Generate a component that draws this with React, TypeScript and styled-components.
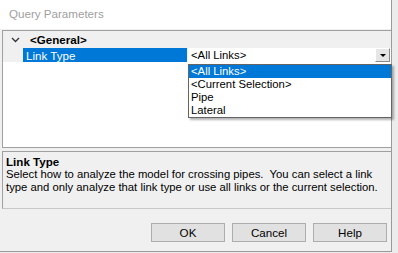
import React from "react";
import styled, { createGlobalStyle } from "styled-components";

const Global = createGlobalStyle`
  html, body { margin: 0; padding: 0; background: #ececec; }
  body { font-family: "Liberation Sans", Arial, sans-serif; font-size: 11.3px; color: #000; }
`;

const Window = styled.div`
  position: relative;
  width: 392px;
  height: 252px;
  box-sizing: border-box;
  border-right: 1px solid #9a9a9a;
  border-bottom: 1px solid #9a9a9a;
  background: #f0f0f0;
  display: flex;
  flex-direction: column;
`;

const TitleBar = styled.div`
  height: 29px;
  background: #ffffff;
  display: flex;
  align-items: center;
  padding: 0 0 3px 9px;
  box-sizing: border-box;
  font-size: 11.6px;
  color: #a0a0a0;
  flex: none;
`;

const Body = styled.div`
  flex: 1;
  display: flex;
  flex-direction: column;
  padding: 1px 0 0 2px;
  box-sizing: border-box;
`;

const Grid = styled.div`
  position: relative;
  height: 118px;
  box-sizing: border-box;
  background: #ffffff;
  border-top: 1px solid #a0a0a0;
  border-left: 1px solid #a0a0a0;
  border-bottom: 1px solid #a0a0a0;
  display: flex;
  flex-direction: column;
`;

const CategoryRow = styled.div`
  height: 17px;
  background: #f0f0f0;
  display: flex;
  align-items: center;
  font-weight: bold;
  font-size: 11.6px;
`;

const Chevron = styled.span`
  width: 27px;
  display: flex;
  justify-content: center;
  padding-right: 2px;
  box-sizing: border-box;
`;

const PropRow = styled.div`
  height: 14px;
  display: flex;
`;

const Margin = styled.div`
  width: 20px;
  background: #f0f0f0;
  flex: none;
`;

const LabelCell = styled.div<{ $selected?: boolean }>`
  width: 165px;
  flex: none;
  background: ${(p) => (p.$selected ? "#0078d7" : "#fff")};
  color: ${(p) => (p.$selected ? "#fff" : "#000")};
  padding-left: 3px;
  box-sizing: border-box;
  display: flex;
  align-items: center;
  border-right: 1px solid #f0f0f0;
  font-size: 11.6px;
`;

const ValueCell = styled.div`
  flex: 1;
  display: flex;
  align-items: center;
  padding-left: 3px;
  position: relative;
`;

const DropButton = styled.div`
  position: absolute;
  right: 1px;
  top: 0;
  width: 15px;
  height: 14px;
  background: #e6e6e6;
  border-left: 1px solid #fff;
  border-top: 1px solid #fff;
  border-right: 1px solid #8a8a8a;
  border-bottom: 1px solid #8a8a8a;
  box-sizing: border-box;
  display: flex;
  align-items: center;
  justify-content: center;
`;

const Arrow = styled.div`
  width: 0;
  height: 0;
  border-left: 3px solid transparent;
  border-right: 3px solid transparent;
  border-top: 3px solid #000;
  margin-top: 1px;
`;

const Popup = styled.ul`
  position: absolute;
  left: 185px;
  top: 33px;
  width: 204px;
  margin: 0;
  padding: 0;
  list-style: none;
  background: #fff;
  border: 1px solid #646464;
  box-sizing: border-box;
  box-shadow: 2px 2px 2px rgba(0, 0, 0, 0.3);
  z-index: 2;
`;

const PopupItem = styled.li<{ $active?: boolean }>`
  height: 13px;
  line-height: 13px;
  padding-left: 2px;
  background: ${(p) => (p.$active ? "#0078d7" : "transparent")};
  color: ${(p) => (p.$active ? "#fff" : "#000")};
`;

const Splitter = styled.div`
  height: 3px;
  flex: none;
`;

const Description = styled.div`
  height: 58px;
  box-sizing: border-box;
  border-top: 1px solid #a0a0a0;
  border-left: 1px solid #a0a0a0;
  border-bottom: 1px solid #c8c8c8;
  background: #f0f0f0;
  padding: 3px 0 0 3px;
  line-height: 13px;
  white-space: nowrap;
`;

const DescTitle = styled.div`
  font-weight: bold;
  font-size: 11.6px;
`;

const ButtonBar = styled.div`
  display: flex;
  justify-content: flex-end;
  gap: 7px;
  padding: 14px 4px 0 0;
`;

const Button = styled.button`
  width: 74px;
  height: 19px;
  box-sizing: border-box;
  border: 1px solid #adadad;
  background: #e1e1e1;
  font-family: inherit;
  font-size: 11.6px;
  color: #000;
  padding: 0;
`;

export default function App() {
  return (
    <>
      <Global />
      <Window>
        <TitleBar>Query Parameters</TitleBar>
        <Body>
          <Grid>
            <CategoryRow>
              <Chevron>
                <svg width="9" height="6" viewBox="0 0 9 6">
                  <path d="M1 1 L4.5 4.5 L8 1" fill="none" stroke="#333" strokeWidth="1.3" />
                </svg>
              </Chevron>
              &lt;General&gt;
            </CategoryRow>
            <PropRow>
              <Margin />
              <LabelCell $selected>Link Type</LabelCell>
              <ValueCell>
                &lt;All Links&gt;
                <DropButton>
                  <Arrow />
                </DropButton>
              </ValueCell>
            </PropRow>
            <Popup>
              <PopupItem $active>&lt;All Links&gt;</PopupItem>
              <PopupItem>&lt;Current Selection&gt;</PopupItem>
              <PopupItem>Pipe</PopupItem>
              <PopupItem>Lateral</PopupItem>
            </Popup>
          </Grid>
          <Splitter />
          <Description>
            <DescTitle>Link Type</DescTitle>
            <div>Select how to analyze the model for crossing pipes.&nbsp; You can select a link</div>
            <div>type and only analyze that link type or use all links or the current selection.</div>
          </Description>
          <ButtonBar>
            <Button>OK</Button>
            <Button>Cancel</Button>
            <Button>Help</Button>
          </ButtonBar>
        </Body>
      </Window>
    </>
  );
}
